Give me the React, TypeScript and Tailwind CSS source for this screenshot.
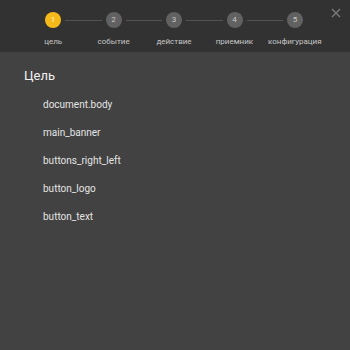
import React from "react";

const STEPS = ["цель", "событие", "действие", "приемник", "конфигурация"];
const TARGETS = [
  "document.body",
  "main_banner",
  "buttons_right_left",
  "button_logo",
  "button_text",
];

export default function App() {
  return (
    <div
      className="relative h-[350px] w-[350px] overflow-hidden bg-[#424242]"
      style={{ fontFamily: "Roboto, 'Noto Sans', sans-serif" }}
    >
      {/* stepper header */}
      <div className="relative h-[52px] bg-[#323232]">
        <div className="flex items-center pl-[45px] pr-[47px] pt-[12px]">
          {STEPS.map((s, i) => (
            <React.Fragment key={s}>
              <span
                className={`flex h-[16px] w-[16px] shrink-0 items-center justify-center rounded-full text-[8px] ${
                  i === 0 ? "bg-[#f6b91a] text-[#fff6dc]" : "bg-[#616161] text-[#c8c8c8]"
                }`}
              >
                {i + 1}
              </span>
              {i < STEPS.length - 1 && (
                <span className="mx-[4px] h-px flex-1 bg-[#545454]" />
              )}
            </React.Fragment>
          ))}
        </div>
        <div className="ml-[23px] mt-[8px] grid w-[302px] grid-cols-5">
          {STEPS.map((s) => (
            <span
              key={s}
              className="whitespace-nowrap text-center text-[8px] leading-[12px] text-[#c4c4c4]"
            >
              {s}
            </span>
          ))}
        </div>
        <button className="absolute right-[9px] top-[8px] text-[#7a7a7a]">
          <svg width="10" height="10" viewBox="0 0 10 10">
            <path d="M1 1L9 9M9 1L1 9" stroke="currentColor" strokeWidth="1.4" />
          </svg>
        </button>
      </div>

      {/* target list */}
      <div className="px-[24px] pt-[15px]">
        <h2 className="text-[13px] leading-[18px] text-[#f2f2f2]">Цель</h2>
        <ul className="mt-[12px] flex flex-col pl-[19px]">
          {TARGETS.map((t) => (
            <li key={t} className="h-[28px] text-[10px] leading-[16px] text-[#e4e4e4]">
              {t}
            </li>
          ))}
        </ul>
      </div>
    </div>
  );
}
